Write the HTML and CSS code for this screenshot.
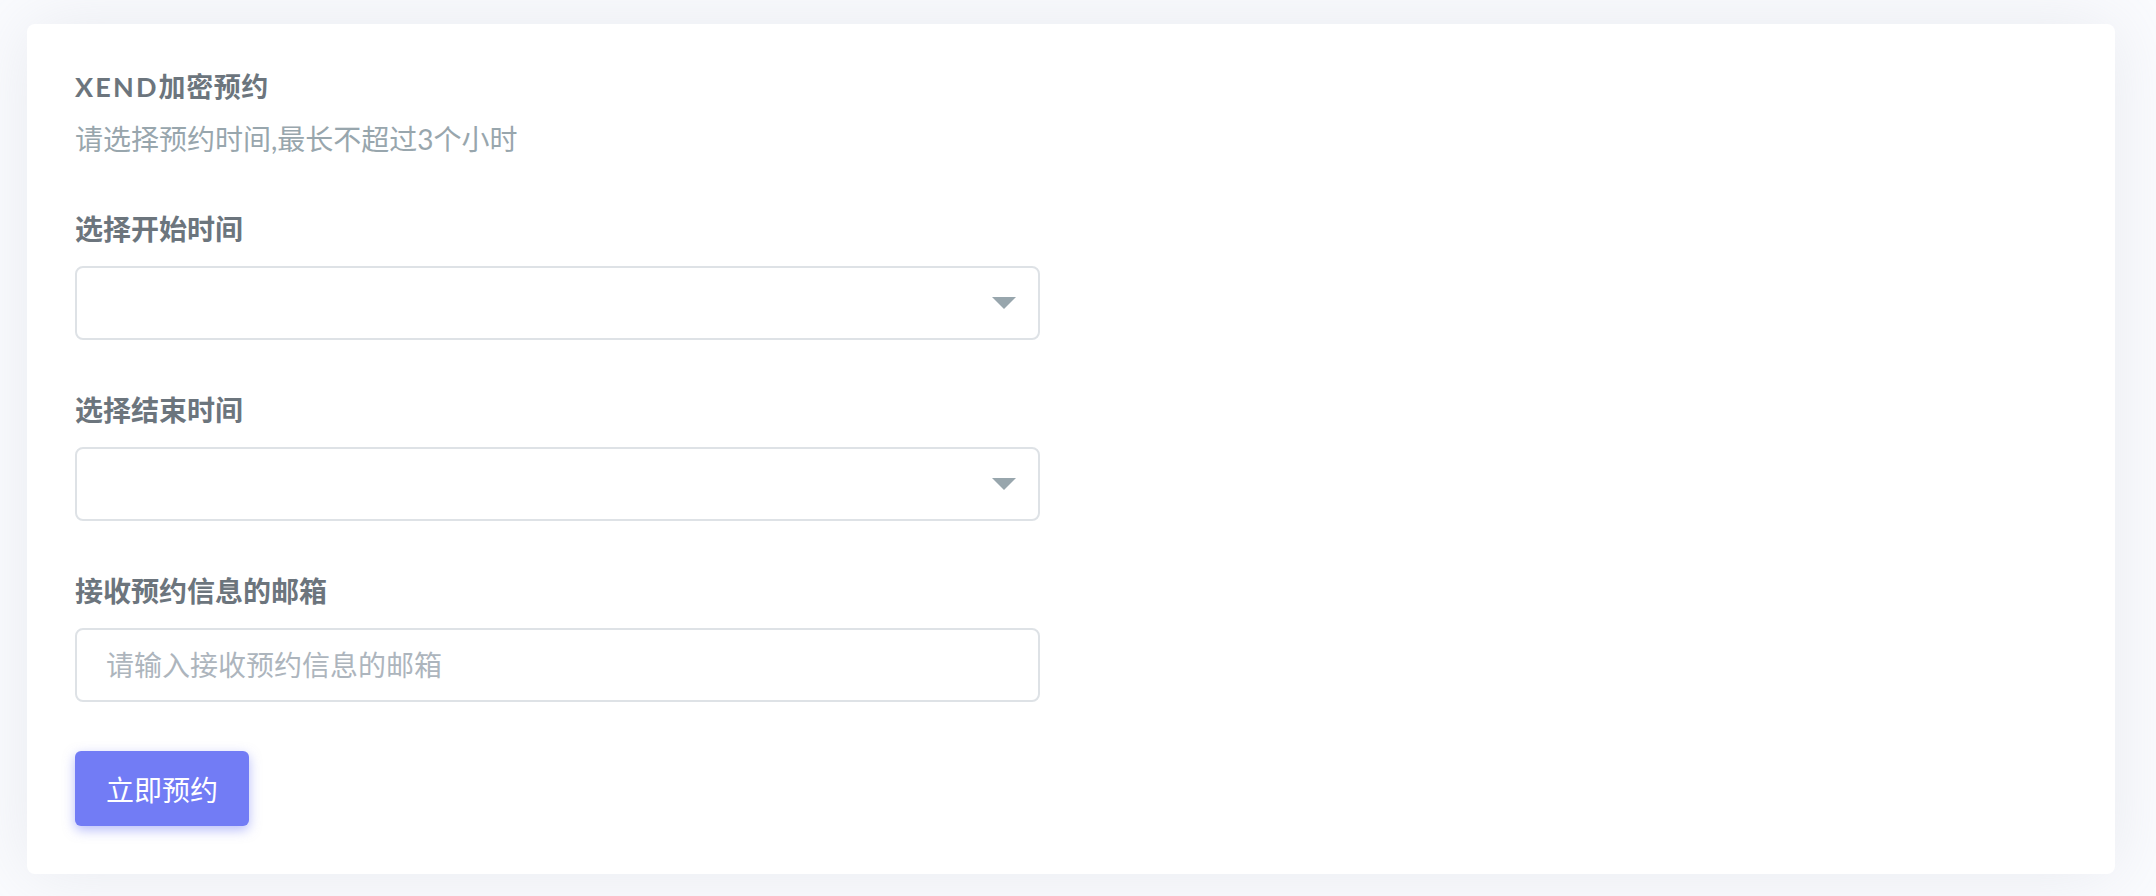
FILE: index.html
```html
<!DOCTYPE html>
<html lang="zh-CN">
<head>
<meta charset="utf-8">
<title>XEND加密预约</title>
<link rel="stylesheet" href="styles.css">
</head>
<body>
<div class="page">
  <div class="card">
    <h4 class="card-title"><span class="card-title-latin">XEND</span>加密预约</h4>
    <p class="card-sub">请选择预约时间,最长不超过3个小时</p>

    <div class="form-group">
      <label class="form-label">选择开始时间</label>
      <div class="select">
        <span class="select-value"></span>
        <svg class="select-arrow" width="24" height="12" viewBox="0 0 24 12"><path d="M0 0 H24 L12 12 Z" fill="#98a6ad"/></svg>
      </div>
    </div>

    <div class="form-group">
      <label class="form-label">选择结束时间</label>
      <div class="select">
        <span class="select-value"></span>
        <svg class="select-arrow" width="24" height="12" viewBox="0 0 24 12"><path d="M0 0 H24 L12 12 Z" fill="#98a6ad"/></svg>
      </div>
    </div>

    <div class="form-group">
      <label class="form-label">接收预约信息的邮箱</label>
      <input class="input" type="text" placeholder="请输入接收预约信息的邮箱">
    </div>

    <button class="btn" type="button">立即预约</button>
  </div>
</div>
</body>
</html>
```

FILE: styles.css
```css
html, body {
  margin: 0;
  padding: 0;
}
body {
  background: #fafbfe;
  font-family: "Lato", "Noto Sans CJK SC", sans-serif;
  color: #6c757d;
}
.page {
  padding: 24px 41px 22px 27px;
}
.card {
  background: #ffffff;
  border-radius: 8px;
  box-shadow: 0 0 70px 0 rgba(154, 161, 171, 0.18);
  padding: 48px;
  display: flex;
  flex-direction: column;
  align-items: flex-start;
}
.card-title {
  margin: 0 0 16px;
  font-size: 27px;
  line-height: 30px;
  font-weight: 700;
  letter-spacing: 0.02em;
  color: #6c757d;
}
.card-title-latin {
  letter-spacing: 0.08em;
}
.card-sub {
  margin: 0 0 48px;
  font-size: 28px;
  line-height: 42px;
  color: #98a6ad;
}
.form-group {
  margin-bottom: 49px;
  display: flex;
  flex-direction: column;
}
.form-label {
  font-size: 28px;
  line-height: 42px;
  font-weight: 700;
  color: #6c757d;
  margin-bottom: 16px;
}
.select {
  box-sizing: border-box;
  width: 965px;
  height: 74px;
  border: 2px solid #dee2e6;
  border-radius: 8px;
  background: #fff;
  display: flex;
  align-items: center;
  justify-content: space-between;
  padding: 0 22px 0 29px;
}
.select-arrow {
  display: block;
}
.input {
  box-sizing: border-box;
  width: 965px;
  height: 74px;
  border: 2px solid #dee2e6;
  border-radius: 8px;
  background: #fff;
  padding: 0 29px;
  font-family: "Lato", "Noto Sans CJK SC", sans-serif;
  font-size: 28px;
  color: #6c757d;
  outline: none;
  margin: 0;
}
.input::placeholder {
  color: #adb5bd;
}
.btn {
  box-sizing: border-box;
  height: 75px;
  padding: 0 31px;
  border: none;
  border-radius: 6px;
  background: #727cf5;
  color: #ffffff;
  font-family: "Lato", "Noto Sans CJK SC", sans-serif;
  font-size: 28px;
  box-shadow: 0 4px 12px 0 rgba(114, 124, 245, 0.5);
  cursor: pointer;
}
```
